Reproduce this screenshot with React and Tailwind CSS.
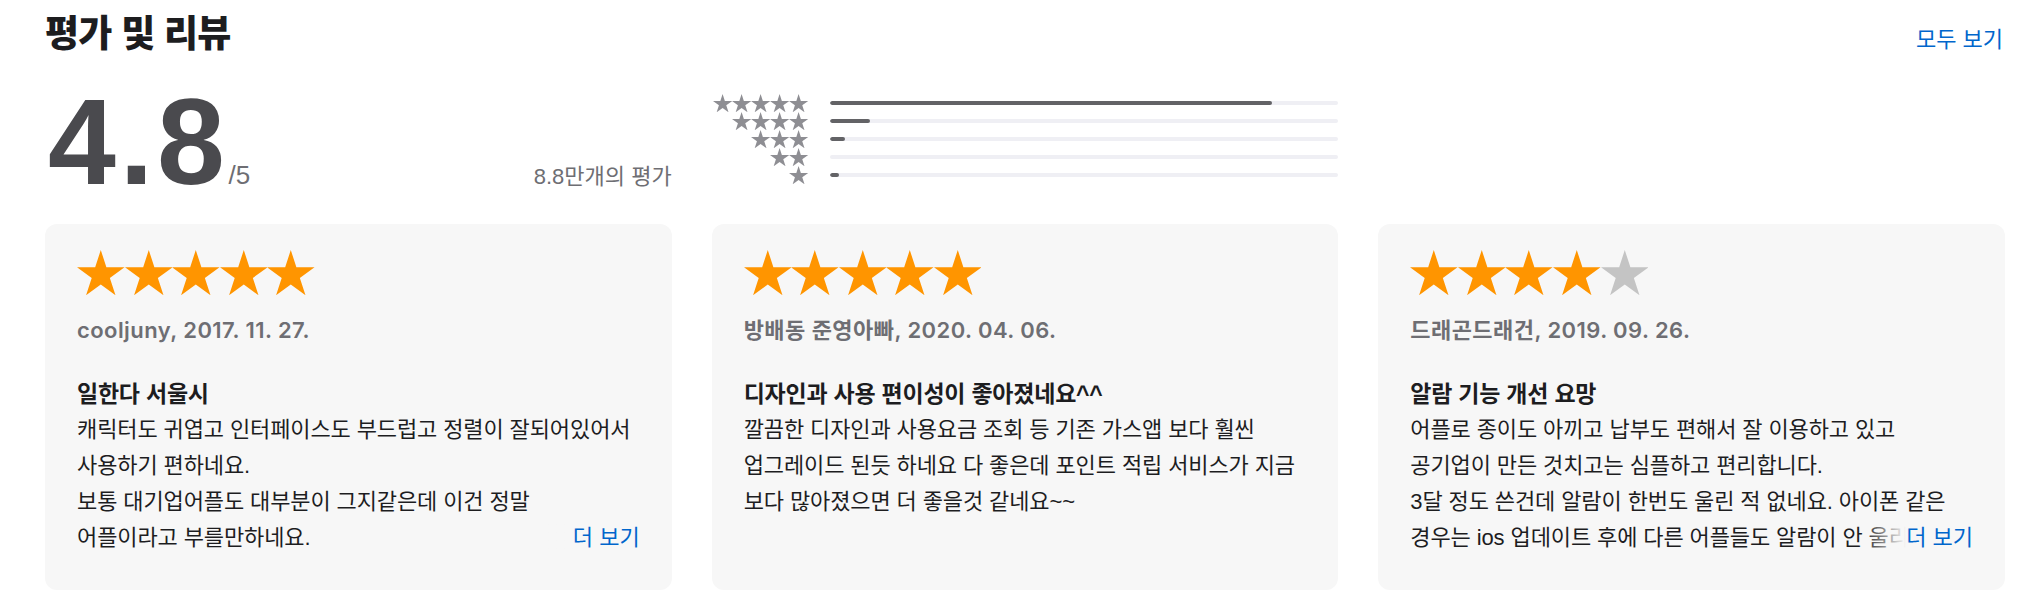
import React from 'react';

const STAR_POINTS =
  '23.78,0 29.39,17.27 47.55,17.27 32.86,27.95 38.48,45.23 23.78,34.55 9.08,45.23 14.7,27.95 0,17.27 18.17,17.27';

function Star({ className, color }) {
  return (
    <svg viewBox="0 0 47.55 45.23" className={className}>
      <polygon points={STAR_POINTS} fill={color} />
    </svg>
  );
}

const histogram = [
  { stars: 5, pct: 87 },
  { stars: 4, pct: 8 },
  { stars: 3, pct: 3 },
  { stars: 2, pct: 0 },
  { stars: 1, pct: 1.8 },
];

const reviews = [
  {
    rating: 5,
    author: 'cooljuny, 2017. 11. 27.',
    title: '일한다 서울시',
    lines: [
      '캐릭터도 귀엽고 인터페이스도 부드럽고 정렬이 잘되어있어서',
      '사용하기 편하네요.',
      '보통 대기업어플도 대부분이 그지같은데 이건 정말',
      '어플이라고 부를만하네요.',
    ],
    more: true,
  },
  {
    rating: 5,
    author: '방배동 준영아빠, 2020. 04. 06.',
    title: '디자인과 사용 편이성이 좋아졌네요^^',
    lines: [
      '깔끔한 디자인과 사용요금 조회 등 기존 가스앱 보다 훨씬',
      '업그레이드 된듯 하네요 다 좋은데 포인트 적립 서비스가 지금',
      '보다 많아졌으면 더 좋을것 같네요~~',
    ],
    more: false,
  },
  {
    rating: 4,
    author: '드래곤드래건, 2019. 09. 26.',
    title: '알람 기능 개선 요망',
    lines: [
      '어플로 종이도 아끼고 납부도 편해서 잘 이용하고 있고',
      '공기업이 만든 것치고는 심플하고 편리합니다.',
      '3달 정도 쓴건데 알람이 한번도 울린 적 없네요. 아이폰 같은',
      '경우는 ios 업데이트 후에 다른 어플들도 알람이 안 울리는데',
    ],
    more: true,
  },
];

function ReviewCard({ review }) {
  return (
    <div className="h-[366px] rounded-xl bg-[#f7f7f7] pt-[26px] px-[32px] overflow-hidden">
      {/* stars */}
      <div className="flex">
        {[0, 1, 2, 3, 4].map((i) => (
          <Star
            key={i}
            className="w-[47.55px] h-[45.23px]"
            color={i < review.rating ? '#ff9500' : '#c4c4c4'}
          />
        ))}
      </div>

      <p className="mt-[21px] text-[22px] leading-[28px] font-semibold tracking-[0.02em] text-[#6e6e73] whitespace-nowrap font-[family-name:Inter,'Noto_Sans_CJK_KR',sans-serif]">
        {review.author}
      </p>

      <h3 className="mt-[32px] text-[23px] leading-[36px] font-bold tracking-[-0.01em] text-[#1d1d1f] whitespace-nowrap">
        {review.title}
      </h3>

      <div className="relative text-[22px] leading-[36px] tracking-[-0.005em] text-[#1d1d1f]">
        {review.lines.map((line, i) => (
          <div key={i} className="whitespace-nowrap overflow-hidden">
            {line}
          </div>
        ))}
        {review.more && (
          <div className="absolute right-0 bottom-0 flex h-[36px]">
            <span className="w-[44px] h-full bg-linear-to-r from-[#f7f7f7]/0 to-[#f7f7f7]" />
            <span className="bg-[#f7f7f7] text-[#0066cc] tracking-normal">더 보기</span>
          </div>
        )}
      </div>
    </div>
  );
}

export default function App() {
  return (
    <div className="w-[2022px] h-[610px] overflow-hidden bg-white pl-[45px] pr-[17px] font-[family-name:'Liberation_Sans','Noto_Sans_CJK_KR',sans-serif]">
      {/* header */}
      <div className="flex items-baseline justify-between pt-[13px]">
        <h2 className="text-[37px] leading-[44px] font-extrabold tracking-[-0.02em] text-[#1d1d1f]">평가 및 리뷰</h2>
        <a href="#" className="mr-[2px] text-[22px] text-[#0066cc]">모두 보기</a>
      </div>

      {/* summary */}
      <div className="grid grid-cols-3 gap-x-[40px] mt-[24px]">
        <div className="flex items-baseline justify-between">
          <div className="flex items-baseline">
            <span className="ml-[3px] text-[122px] leading-none font-bold tracking-[0.03em] text-[#4a4a4e]">4.8</span>
            <span className="text-[26px] text-[#6e6e73]">/5</span>
          </div>
          <span className="text-[22px] text-[#6e6e73]">8.8만개의 평가</span>
        </div>

        <div className="self-start mt-[13px] flex flex-col">
          {histogram.map((row) => (
            <div key={row.stars} className="flex items-center h-[18px] gap-[21px]">
              <div className="w-[97px] flex justify-end">
                {Array.from({ length: row.stars }).map((_, i) => (
                  <Star key={i} className="w-[19.2px] h-[18.3px]" color="#8e8e93" />
                ))}
              </div>
              <div className="flex-1 h-[4px] rounded-full bg-[#efeff4] overflow-hidden">
                <div className="h-full rounded-full bg-[#636366]" style={{ width: `${row.pct}%` }} />
              </div>
            </div>
          ))}
        </div>

        <div />
      </div>

      {/* reviews */}
      <div className="grid grid-cols-3 gap-x-[40px] mt-[21px]">
        {reviews.map((r, i) => (
          <ReviewCard key={i} review={r} />
        ))}
      </div>
    </div>
  );
}
